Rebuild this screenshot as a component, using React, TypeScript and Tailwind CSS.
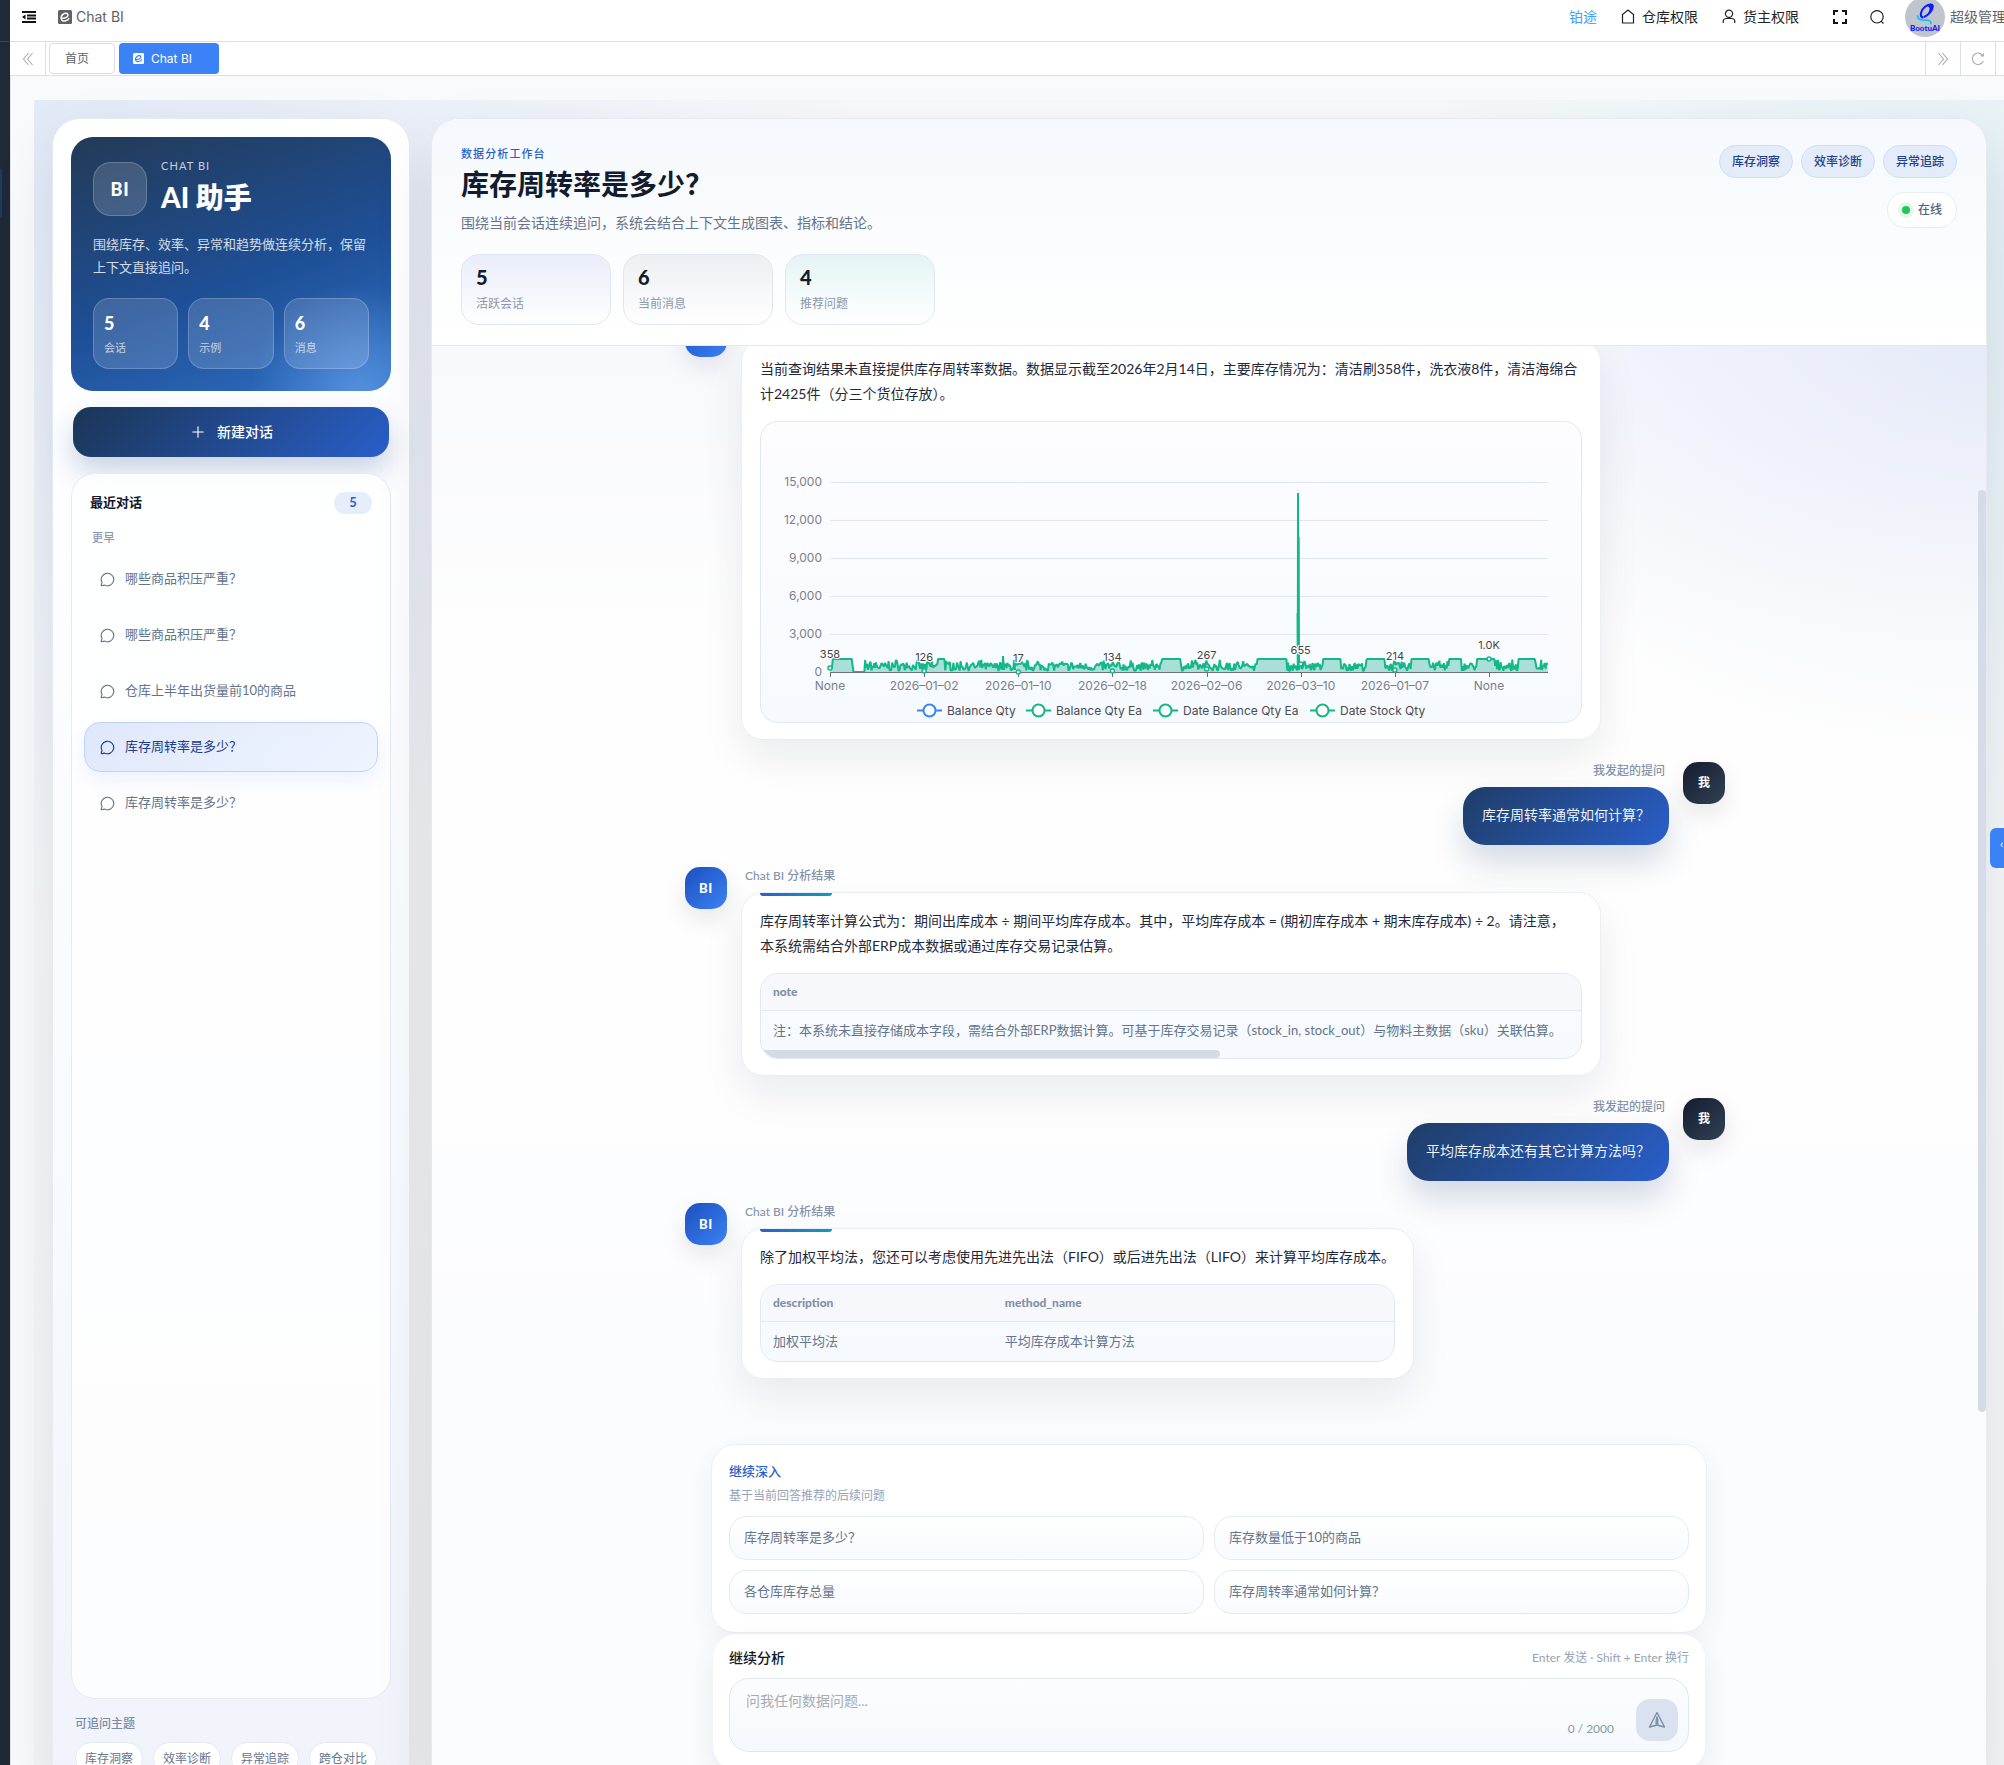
import type { ReactNode } from 'react';
import { MessageCircle, Plus } from 'lucide-react';

const HISTORY = [
  { id: 1, title: '哪些商品积压严重？' },
  { id: 2, title: '哪些商品积压严重？' },
  { id: 3, title: '仓库上半年出货量前10的商品' },
  { id: 4, title: '库存周转率是多少？', active: true },
  { id: 5, title: '库存周转率是多少？' },
];

const TOPICS = ['库存洞察', '效率诊断', '异常追踪', '跨仓对比'];
const HEADER_TAGS = ['库存洞察', '效率诊断', '异常追踪'];
const FOLLOW_UPS = ['库存周转率是多少？', '库存数量低于10的商品', '各仓库库存总量', '库存周转率通常如何计算？'];

const HERO_STATS = [
  { value: 5, label: '会话' },
  { value: 4, label: '示例' },
  { value: 6, label: '消息' },
];

const HEADER_STATS = [
  { value: 5, label: '活跃会话', tone: 'from-[#e9edfa]' },
  { value: 6, label: '当前消息', tone: 'from-[#eeeff2]' },
  { value: 4, label: '推荐问题', tone: 'from-[#e5f4f6]' },
];

/* ---------- Icons ---------- */

function ChatBadgeIcon({ className, mark }: { className: string; mark: string }) {
  return (
    <svg viewBox="0 0 14 14" className={className} aria-hidden="true">
      <rect width="14" height="14" rx="1.5" fill="currentColor" />
      <path
        d="M4.6 8.2c2.6 0 5.6-1.300 5.400-3.300-.2-1.800-2.800-2.100-4.600-.9-2.400 1.500-3.200 4.900-1.300 6.300 1.900 1.400 5.200.6 6.700-1.700"
        fill="none"
        stroke={mark}
        strokeWidth="1.500"
        strokeLinecap="round"
      />
    </svg>
  );
}

function FoldIcon() {
  return (
    <svg viewBox="0 0 14 12" className="h-3 w-3.5" aria-hidden="true">
      <path d="M0 1h14M5 4.500h9M5 7.500h9M0 11h14" stroke="#111" strokeWidth="1.800" />
      <path d="M0 6l3.500-2.500v5z" fill="#111" />
    </svg>
  );
}

function HomeIcon() {
  return (
    <svg viewBox="0 0 14 15" className="h-[15px] w-3.5" fill="none" stroke="#222" strokeWidth="1.200" aria-hidden="true">
      <path d="M1.500 14V5.500L7 1l5.500 4.500V14z" />
    </svg>
  );
}

function UserIcon() {
  return (
    <svg viewBox="0 0 14 15" className="h-[15px] w-3.5" fill="none" stroke="#222" strokeWidth="1.200" aria-hidden="true">
      <circle cx="7" cy="4.800" r="3.600" />
      <path d="M1.200 14v-1.500c0-2 1.300-3 3.300-3h5c2 0 3.300 1 3.300 3V14" />
    </svg>
  );
}

function FullscreenIcon() {
  return (
    <svg viewBox="0 0 16 16" className="h-4 w-4" fill="none" stroke="#111" strokeWidth="2" aria-hidden="true">
      <path d="M2 6V2h4M10 2h4v4M14 10v4h-4M6 14H2v-4" />
    </svg>
  );
}

function SearchIcon() {
  return (
    <svg viewBox="0 0 16 16" className="h-4 w-4" fill="none" stroke="#222" strokeWidth="1.200" aria-hidden="true">
      <circle cx="8" cy="7.800" r="6.200" />
      <path d="M12.200 12.200l2.300 2.300" />
    </svg>
  );
}

function DoubleChevron({ direction }: { direction: 'left' | 'right' }) {
  return (
    <svg viewBox="0 0 12 14" className="h-3.5 w-3" fill="none" stroke="#a8abb2" strokeWidth="1.100" aria-hidden="true">
      {direction === 'left' ? <path d="M6.500 1L1.500 7l5 6M10.500 1l-5 6 5 6" /> : <path d="M1.500 1l5 6-5 6M5.500 1l5 6-5 6" />}
    </svg>
  );
}

function ReloadIcon() {
  return (
    <svg viewBox="0 0 14 14" className="h-3.5 w-3.5" fill="none" stroke="#a8abb2" strokeWidth="1.100" aria-hidden="true">
      <path d="M12.300 9A5.700 5.700 0 1 1 12 3.900" />
      <path d="M9.500 3.600l2.800.6.300-2.900" />
    </svg>
  );
}

function SendIcon() {
  return (
    <svg viewBox="0 0 18 18" className="h-[18px] w-[18px]" fill="none" stroke="#7b8ca6" strokeWidth="1.400" strokeLinejoin="round" aria-hidden="true">
      <path d="M9 1.500L16.500 16 9.800 14.200V9.500L9 6l-.8 3.500v4.700L1.500 16z" />
    </svg>
  );
}

function Avatar() {
  return (
    <svg viewBox="0 0 40 40" className="h-10 w-10 shrink-0" role="img" aria-label="BootuAI">
      <circle cx="20" cy="20" r="20" fill="#c0c4cc" />
      <g fill="none" strokeLinecap="round">
        <path d="M12.500 19c0 3.800 5.500 4.300 8.500 4.200 2.600-.1 5 .4 5 3.300" stroke="#12c4f5" strokeWidth="1.800" />
        <path d="M17.500 20.500c-3.200-1.700-1.500-7.500 2.500-10.700 3.600-2.900 7.800-3.300 7.800-.3 0 3.700-4.800 9.200-8.300 10.200" stroke="#0b1cff" strokeWidth="2" />
      </g>
      <path d="M20 9.500c3.500-3.500 8.500-3.600 8.200.3-.3 3.700-3.700 7.500-7 9.200 2.300-3 3.600-6 3.300-7.800-.3-1.700-2.200-2.200-4.500-1.700z" fill="#0b1cff" />
      <text x="20" y="34" textAnchor="middle" fontSize="8" fontWeight="900" fill="#0b1cff" className="font-[Lato]">
        BootuAI
      </text>
    </svg>
  );
}

/* ---------- Chart ---------- */

const X0 = 69;
const X1 = 787;
const Y0 = 250;
const TICK_STEP = 94.143;

// stretches where the stock stays on one level: [from, to, height]
const LEVELS = [
  [71, 91, 13],
  [92, 104, 0],
  [177, 184, 13],
  [401, 420, 13],
  [496, 526, 13],
  [562, 580, 13],
  [606, 624, 13],
  [650, 668, 13],
  [688, 700, 13],
  [716, 734, 13],
  [757, 774, 13],
];

function stockPath(): string {
  let seed = 7;
  const rand = () => {
    seed = (seed * 16807) % 2147483647;
    return seed / 2147483647;
  };
  const pts: string[] = [`${X0},${Y0 - 4}`];
  for (let x = X0 + 1; x <= X1; x += 0.9) {
    const level = LEVELS.find(([from, to]) => x >= from && x <= to);
    let h: number;
    if (level) {
      h = level[2];
      if (h && rand() > 0.97) h = 7;
    } else {
      h = 1 + rand() * 8.5 + (rand() > 0.85 ? 3 : 0);
    }
    pts.push(`${x.toFixed(1)},${(Y0 - h).toFixed(1)}`);
    if (Math.abs(x - 242) < 0.45) pts.push('242,234', '243,248');
    if (Math.abs(x - 253) < 0.45) pts.push('253,238', '254,248');
    if (Math.abs(x - 537) < 0.45) pts.push('536.5,191', '536.8,248', '537,71', '537.3,248', '537.7,115', '538,248');
  }
  return pts.join(' L');
}

const STOCK = stockPath();

const TICKS = ['None', '2026–01–02', '2026–01–10', '2026–02–18', '2026–02–06', '2026–03–10', '2026–01–07', 'None'];
const POINTS = [
  { label: '358', y: 246 },
  { label: '126', y: 249 },
  { label: '17', y: 250 },
  { label: '134', y: 249 },
  { label: '267', y: 247 },
  { label: '655', y: 242 },
  { label: '214', y: 248 },
  { label: '1.0K', y: 237 },
];
const Y_LABELS = ['15,000', '12,000', '9,000', '6,000', '3,000', '0'];
const LEGEND = [
  { name: 'Balance Qty', x: 156, color: '#3b82f6' },
  { name: 'Balance Qty Ea', x: 265, color: '#10b981' },
  { name: 'Date Balance Qty Ea', x: 392, color: '#10b981' },
  { name: 'Date Stock Qty', x: 549, color: '#10b981' },
];

function StockChart() {
  return (
    <svg viewBox="0 0 820 300" className="block w-full font-[Inter]" role="img" aria-label="Balance Qty">
      {Y_LABELS.map((label, i) => (
        <g key={label}>
          <text x={61} y={64 + i * 38} textAnchor="end" fontSize="12" fill="#7c7f87">
            {label}
          </text>
          {i < 5 && <path d={`M${X0} ${60.5 + i * 38}H${X1}`} stroke="#e0e6f1" />}
        </g>
      ))}
      <path d={`M${STOCK} L${X1},${Y0} L${X0},${Y0}Z`} fill="#a9dfd8" />
      <path d={`M${STOCK}`} fill="none" stroke="#12b886" strokeWidth="2" strokeLinejoin="bevel" />
      <path d={`M${X0} 250.500H${X1}`} stroke="#6e7079" />
      {TICKS.map((label, i) => {
        const x = X0 + i * TICK_STEP;
        const point = POINTS[i];
        return (
          <g key={i}>
            <path d={`M${Math.round(x) + 0.5} 250v5`} stroke="#6e7079" />
            <text x={x} y={268} textAnchor="middle" fontSize="12" fill="#7c7f87">
              {label}
            </text>
            <circle cx={x} cy={point.y} r="2" fill="#fff" stroke="#12b886" strokeWidth="1.500" />
            <text x={x} y={point.y - 10} textAnchor="middle" fontSize="11" fill="#444" stroke="#fff" strokeWidth="2" paintOrder="stroke">
              {point.label}
            </text>
          </g>
        );
      })}
      {LEGEND.map(item => (
        <g key={item.name}>
          <path d={`M${item.x} 288.500h25`} stroke={item.color} strokeWidth="2" />
          <circle cx={item.x + 12.5} cy="288.500" r="6" fill="#fff" stroke={item.color} strokeWidth="2" />
          <text x={item.x + 30} y="293" fontSize="12" fill="#4a4c52">
            {item.name}
          </text>
        </g>
      ))}
    </svg>
  );
}

/* ---------- Shell ---------- */

function TopBar() {
  return (
    <header className="flex h-[42px] shrink-0 items-center justify-between border-b border-[#dcdfe6] bg-white pb-2 pl-3 text-sm text-[#222]">
      <div className="flex items-center">
        <button type="button" aria-label="菜单">
          <FoldIcon />
        </button>
        <span className="ml-[22px] flex items-center gap-1 font-[Inter] text-[#606266]">
          <ChatBadgeIcon className="h-3.5 w-3.5" mark="#fff" />
          Chat BI
        </span>
      </div>
      <nav className="-mr-4 flex items-center whitespace-nowrap">
        <a href="#" className="text-[#409eff]">铂途</a>
        <a href="#" className="ml-6 flex items-center gap-[7px]">
          <HomeIcon />
          仓库权限
        </a>
        <a href="#" className="ml-6 flex items-center gap-[7px]">
          <UserIcon />
          货主权限
        </a>
        <button type="button" className="ml-[33px]" aria-label="全屏">
          <FullscreenIcon />
        </button>
        <button type="button" className="ml-[21px]" aria-label="搜索">
          <SearchIcon />
        </button>
        <button type="button" className="-my-2 ml-5 flex items-center gap-[5px] text-[#606266]">
          <Avatar />
          超级管理员
        </button>
      </nav>
    </header>
  );
}

function TabBar() {
  return (
    <div className="flex h-[34px] shrink-0 items-center border-b border-[#dcdfe6] bg-white text-xs">
      <button type="button" className="flex h-full w-9 items-center justify-center border-r border-[#dcdfe6]" aria-label="向左">
        <DoubleChevron direction="left" />
      </button>
      <div className="flex h-full flex-1 items-center gap-1 pl-[3px]">
        <a href="#" className="flex h-[31px] w-[66px] items-center rounded-sm border border-[#d8dce5] pl-[15px] text-[#606266]">
          首页
        </a>
        <a href="#" className="flex h-[31px] w-[100px] items-center gap-[7px] rounded-sm bg-[#3b82f6] pl-3.5 font-[Inter] text-white">
          <ChatBadgeIcon className="h-[11px] w-[11px]" mark="#3b82f6" />
          Chat BI
        </a>
      </div>
      <button type="button" className="flex h-full w-[35px] items-center justify-center border-l border-[#dcdfe6]" aria-label="向右">
        <DoubleChevron direction="right" />
      </button>
      <button type="button" className="flex h-full w-[35px] items-center justify-center border-l border-[#dcdfe6]" aria-label="刷新">
        <ReloadIcon />
      </button>
      <span className="h-full w-[9px] border-l border-[#dcdfe6]" />
    </div>
  );
}

/* ---------- Sidebar ---------- */

function Sidebar() {
  return (
    <aside className="flex w-[358px] shrink-0 flex-col rounded-[28px] border border-[#e6eaf1] bg-linear-to-b from-white via-[#f9fcff] to-[#f0f3fa] px-[18px] pt-[18px] pb-[13px] shadow-[0_24px_60px_rgba(15,23,42,0.10)]">
      <section className="rounded-[22px] bg-[radial-gradient(circle_at_90%_100%,rgba(120,178,250,0.5),transparent_28%),linear-gradient(160deg,#233a57_0%,#1e4f96_55%,#2f6fc4_100%)] p-[22px] text-white">
        <div className="flex items-center gap-3.5">
          <span className="flex h-[54px] w-[54px] items-center justify-center rounded-[18px] border border-white/20 bg-white/15 text-lg font-black tracking-wider">
            BI
          </span>
          <div>
            <p className="text-[11px] leading-[14px] tracking-widest text-white/75">CHAT BI</p>
            <h2 className="mt-1 pb-0.5 text-[28px] leading-10 font-black">AI 助手</h2>
          </div>
        </div>
        <p className="mt-3.5 text-[13px] leading-[23px] text-white/80">围绕库存、效率、异常和趋势做连续分析，保留上下文直接追问。</p>
        <div className="mt-[19px] grid grid-cols-3 gap-2.5">
          {HERO_STATS.map(stat => (
            <div key={stat.label} className="rounded-2xl border border-white/20 bg-white/15 px-2.5 py-3">
              <strong className="block text-lg leading-6 font-black">{stat.value}</strong>
              <span className="mt-1 block text-[11px] leading-[17px] text-white/70">{stat.label}</span>
            </div>
          ))}
        </div>
      </section>

      <button
        type="button"
        className="mx-0.5 mt-4 flex h-[50px] shrink-0 items-center justify-center gap-2.5 rounded-[18px] bg-linear-135 from-[#1b3557] to-[#2a5fcb] text-sm font-medium text-white shadow-[0_14px_28px_rgba(37,72,140,0.24)]"
      >
        <Plus size={18} strokeWidth={1.5} />
        新建对话
      </button>

      <section className="mt-4 flex min-h-0 flex-1 flex-col rounded-[24px] border border-[#e6eaf2] bg-white/80 px-3 pt-[18px]">
        <div className="flex items-center justify-between px-1.5">
          <h3 className="text-[13px] font-bold text-[#0f172a]">最近对话</h3>
          <span className="flex h-[22px] w-[38px] items-center justify-center rounded-full bg-[#e6edfc] text-[13px] font-bold text-[#2f5fd0]">5</span>
        </div>
        <p className="mt-4 px-2 text-[11px] leading-4 font-medium tracking-wider text-[#8a98b0]">更早</p>
        <ul className="mt-2 flex flex-col gap-1.5">
          {HISTORY.map(item => (
            <li key={item.id}>
              <button
                type="button"
                className={`flex h-[50px] w-full items-center gap-2.5 rounded-2xl border px-[15px] text-[13px] ${
                  item.active
                    ? 'border-[#bfd3f8] bg-linear-135 from-[#dfe8fb] to-[#eff5ff] text-[#1e3a8a] shadow-[0_10px_20px_rgba(37,99,235,0.08)]'
                    : 'border-transparent text-[#64748b]'
                }`}
              >
                <MessageCircle size={15} strokeWidth={1.8} />
                {item.title}
              </button>
            </li>
          ))}
        </ul>
      </section>

      <section className="px-1 pt-4">
        <h3 className="text-xs leading-[18px] font-medium text-[#7c8aa5]">可追问主题</h3>
        <div className="mt-[9px] flex gap-2.5">
          {TOPICS.map(topic => (
            <button key={topic} type="button" className="h-[33px] rounded-full border border-[#e6eaf2] bg-white px-[9px] text-xs text-[#64748b]">
              {topic}
            </button>
          ))}
        </div>
      </section>
    </aside>
  );
}

/* ---------- Messages ---------- */

function BotMessage({ children }: { children: ReactNode }) {
  return (
    <div className="flex shrink-0 items-start gap-3.5">
      <span className="flex h-[42px] w-[42px] shrink-0 items-center justify-center rounded-[15px] bg-linear-135 from-[#1d4fbf] to-[#3b82f6] text-[13px] font-black tracking-wider text-white shadow-[0_10px_24px_rgba(15,23,42,0.10)]">
        BI
      </span>
      <div className="max-w-[860px] min-w-0">
        <p className="mb-[7px] px-1 text-xs leading-[18px] font-medium text-[#8493ab]">Chat BI 分析结果</p>
        <div className="relative rounded-[22px] border border-[#ebeef4] bg-white px-[18px] pt-[15px] pb-4 shadow-[0_18px_40px_rgba(15,23,42,0.08)]">
          <span className="absolute top-0 left-[18px] h-[3px] w-[72px] rounded-b-sm bg-linear-to-r from-[#2a5fcb] to-[#0f9ab8]" />
          {children}
        </div>
      </div>
    </div>
  );
}

function UserMessage({ children }: { children: ReactNode }) {
  return (
    <div className="flex shrink-0 items-start justify-end gap-3.5">
      <div>
        <p className="mb-[7px] px-1 text-right text-xs leading-[18px] font-medium text-[#8493ab]">我发起的提问</p>
        <p className="rounded-[22px] bg-linear-135 from-[#1f3d68] to-[#2a5fcb] px-[19px] pt-[15px] pb-[17px] text-sm leading-[26px] text-white/95 shadow-[0_18px_32px_rgba(30,58,110,0.18)]">
          {children}
        </p>
      </div>
      <span className="flex h-[42px] w-[42px] shrink-0 items-center justify-center rounded-[15px] bg-linear-135 from-[#141d2e] to-[#334155] text-xs font-bold text-white shadow-[0_10px_24px_rgba(15,23,42,0.10)]">
        我
      </span>
    </div>
  );
}

function ResultTable({ columns, row, scroll }: { columns: string[]; row: string[]; scroll?: boolean }) {
  return (
    <div className="mt-[15px] overflow-hidden rounded-[18px] border border-[#e1e8f2] bg-linear-to-b from-[#f8fafe] to-[#f6faff]">
      <table className="w-full text-left text-[13px] text-[#64748b]">
        <thead>
          <tr className="border-b border-[#e4eaf3] bg-[#f6f8fc] text-xs text-[#8290a8]">
            {columns.map(name => (
              <th key={name} className="px-3 py-2.5 leading-4 font-black">{name}</th>
            ))}
          </tr>
        </thead>
        <tbody>
          <tr>
            {row.map(cell => (
              <td key={cell} className="px-3 py-2.5 leading-[19px]">{cell}</td>
            ))}
          </tr>
        </tbody>
      </table>
      {scroll && <div className="h-2 w-[56%] rounded-r-sm bg-[#d3dce6]" />}
    </div>
  );
}

function Messages() {
  return (
    <div className="relative flex min-h-0 flex-1 flex-col justify-end overflow-hidden bg-[radial-gradient(ellipse_at_100%_0%,rgba(99,130,220,0.12),transparent_27%),linear-gradient(180deg,#f8f9fd_0%,#fefefe_28%,#fefefe_60%,#fbfcfe_100%)] pr-2 pb-[47px]">
      <div className="mx-auto flex w-full max-w-[1040px] flex-col gap-[22px] text-sm leading-[25px] text-[#1e293b]">
        <BotMessage>
          <p>当前查询结果未直接提供库存周转率数据。数据显示截至2026年2月14日，主要库存情况为：清洁刷358件，洗衣液8件，清洁海绵合计2425件（分三个货位存放）。</p>
          <div className="mt-[15px] rounded-[18px] border border-[#e1e8f2] bg-linear-to-b from-[#fdfdff] to-[#f6faff]">
            <StockChart />
          </div>
        </BotMessage>
        <UserMessage>库存周转率通常如何计算？</UserMessage>
        <BotMessage>
          <p className="w-[860px] max-w-full">
            库存周转率计算公式为：期间出库成本 ÷ 期间平均库存成本。其中，平均库存成本 = (期初库存成本 + 期末库存成本) ÷ 2。请注意，
            <br />
            本系统需结合外部ERP成本数据或通过库存交易记录估算。
          </p>
          <ResultTable
            columns={['note']}
            row={['注：本系统未直接存储成本字段，需结合外部ERP数据计算。可基于库存交易记录（stock_in, stock_out）与物料主数据（sku）关联估算。']}
            scroll
          />
        </BotMessage>
        <UserMessage>平均库存成本还有其它计算方法吗？</UserMessage>
        <BotMessage>
          <p>除了加权平均法，您还可以考虑使用先进先出法（FIFO）或后进先出法（LIFO）来计算平均库存成本。</p>
          <ResultTable columns={['description', 'method_name']} row={['加权平均法', '平均库存成本计算方法']} />
        </BotMessage>
      </div>
      <span className="absolute top-[144px] right-0 bottom-3.5 w-2 rounded-full bg-[#d5dce7]" />
    </div>
  );
}

function Composer() {
  return (
    <footer className="shrink-0 bg-[#fbfcfe] px-6 pt-[18px] pb-[18px]">
      <div className="mx-auto max-w-[996px]">
        <section className="rounded-[24px] border border-[#ebeff5] bg-white px-[17px] pt-4 pb-[18px] shadow-[0_10px_30px_rgba(15,23,42,0.06)]">
          <h3 className="text-[13px] leading-5 font-medium text-[#2a5fcb]">继续深入</h3>
          <p className="mt-1.5 text-xs leading-[18px] text-[#94a3b8]">基于当前回答推荐的后续问题</p>
          <div className="mt-[11px] grid grid-cols-2 gap-2.5">
            {FOLLOW_UPS.map(question => (
              <button
                key={question}
                type="button"
                className="h-11 rounded-[18px] border border-[#e4eaf3] bg-linear-to-b from-white to-[#f8fafe] px-3.5 text-left text-[13px] text-[#64748b]"
              >
                {question}
              </button>
            ))}
          </div>
        </section>
        <section className="mx-0.5 mt-px rounded-[24px] bg-white px-4 pt-[15px] pb-[18px] shadow-[0_12px_30px_rgba(15,23,42,0.08)]">
          <div className="flex items-center justify-between">
            <label htmlFor="question" className="text-sm leading-[18px] font-medium text-[#0f172a]">继续分析</label>
            <span className="text-xs leading-[18px] text-[#94a3b8]">Enter 发送 · Shift + Enter 换行</span>
          </div>
          <div className="mt-[11px] flex h-[74px] items-end rounded-[20px] border border-[#dfe7f1] bg-linear-to-b from-[#fcfdff] to-[#f5f9fd] pr-2.5 pb-2.5 pl-4">
            <textarea
              id="question"
              placeholder="问我任何数据问题..."
              className="h-[62px] flex-1 resize-none bg-transparent pt-3 text-sm leading-5 outline-none placeholder:text-[#a8abb2]"
            />
            <span className="mr-[22px] mb-0.5 text-xs leading-5 text-[#8c97a8]">0 / 2000</span>
            <button type="button" className="flex h-[42px] w-[42px] items-center justify-center rounded-[14px] bg-[#dae2ef]" aria-label="发送">
              <SendIcon />
            </button>
          </div>
        </section>
      </div>
    </footer>
  );
}

function Workbench() {
  return (
    <main className="flex min-w-0 flex-1 flex-col overflow-hidden rounded-[28px] border border-[#e6eaf0] bg-white shadow-[0_24px_60px_rgba(15,23,42,0.10)]">
      <header className="flex shrink-0 justify-between border-b border-[#e4e9f1] bg-linear-to-b from-[#f5f9fd] to-white px-[29px] pt-[26px] pb-5">
        <div>
          <p className="text-[11px] leading-[18px] font-medium tracking-widest text-[#2a5fcb]">数据分析工作台</p>
          <h1 className="mt-[3px] text-[28px] leading-9 font-bold text-[#131c2f]">库存周转率是多少？</h1>
          <p className="mt-2.5 text-sm leading-[22px] text-[#64748b]">围绕当前会话连续追问，系统会结合上下文生成图表、指标和结论。</p>
          <div className="mt-5 flex gap-3">
            {HEADER_STATS.map(stat => (
              <div key={stat.label} className={`h-[71px] w-[150px] rounded-[18px] border border-[#e1e7f0] bg-linear-to-b to-white px-3.5 pt-2.5 ${stat.tone}`}>
                <strong className="block text-xl leading-6 font-black text-[#131c2f]">{stat.value}</strong>
                <span className="mt-1.5 block text-xs leading-[18px] text-[#8b98ad]">{stat.label}</span>
              </div>
            ))}
          </div>
        </div>
        <div className="flex flex-col items-end gap-3.5">
          <div className="flex gap-2">
            {HEADER_TAGS.map(tag => (
              <span key={tag} className="flex h-[33px] items-center rounded-full border border-[#cfdcf3] bg-[#e5ecf9] px-3 text-xs font-medium text-[#1e3f8a]">
                {tag}
              </span>
            ))}
          </div>
          <span className="flex h-9 items-center gap-2 rounded-full border border-[#e8edf3] bg-white px-3.5 text-xs font-medium text-[#526178]">
            <i className="h-2 w-2 rounded-full bg-[#22c55e] ring-4 ring-[#22c55e]/12" />
            在线
          </span>
        </div>
      </header>
      <Messages />
      <Composer />
    </main>
  );
}

export default function App() {
  return (
    <div className="relative flex h-screen overflow-hidden bg-[#f9fafc] font-[Lato,'Noto_Sans_CJK_SC',sans-serif]">
      <div className="w-2.5 shrink-0 bg-[#1f2937] pt-[41px]">
        <div className="h-px bg-[#3b4656]" />
        <div className="mt-[127px] h-[49px] w-0.5 rounded-r bg-[#1e3a5f]" />
      </div>
      <div className="flex min-w-0 flex-1 flex-col">
        <TopBar />
        <TabBar />
        <div className="shrink-0 border-l border-[#e2e5ea] pt-6 pl-[23px]">
          <div className="flex h-[calc(100vh-58px)] gap-[21px] bg-[radial-gradient(circle_at_0%_0%,rgba(59,110,220,0.11),transparent_32%),radial-gradient(circle_at_100%_10%,rgba(20,150,190,0.09),transparent_24%),linear-gradient(180deg,#f7f9fb_0%,#f3f5f7_100%)] py-[18px] pr-[17px] pl-[18px]">
            <Sidebar />
            <Workbench />
          </div>
        </div>
      </div>
      <button type="button" className="absolute top-[828px] right-0 h-10 w-3.5 rounded-l-md bg-[#3b82f6] pb-2 pl-2.5 text-left text-xs text-white" aria-label="设置">
        ‹
      </button>
    </div>
  );
}
